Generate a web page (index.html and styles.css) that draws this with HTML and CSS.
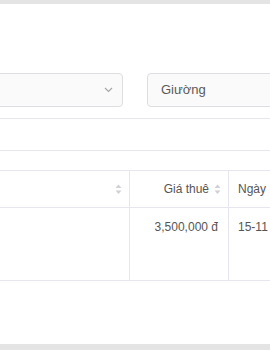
FILE: index.html
```html
<!DOCTYPE html>
<html>
<head>
<meta charset="utf-8">
<link rel="stylesheet" href="styles.css">
</head>
<body>
<div class="panel">
  <div class="filters">
    <div class="select">
      <svg class="chev" width="9" height="6" viewBox="0 0 9 6"><polyline points="1,1 4.5,4.5 8,1" fill="none" stroke="#a6a6a6" stroke-width="1.2"/></svg>
    </div>
    <div class="input">Giường</div>
  </div>
  <div class="bar"></div>
  <div class="table">
    <div class="row head">
      <div class="cell c1"><svg class="sort" width="7" height="11" viewBox="0 0 7 11"><polygon points="3.5,0.5 6.5,4 0.5,4" fill="#d0d0d5"/><polygon points="0.5,6.5 6.5,6.5 3.5,10" fill="#d0d0d5"/></svg></div>
      <div class="cell c2"><span>Giá thuê</span><svg class="sort" width="7" height="11" viewBox="0 0 7 11"><polygon points="3.5,0.5 6.5,4 0.5,4" fill="#d0d0d5"/><polygon points="0.5,6.5 6.5,6.5 3.5,10" fill="#d0d0d5"/></svg></div>
      <div class="cell c3">Ngày</div>
    </div>
    <div class="row body">
      <div class="cell c1"></div>
      <div class="cell c2">3,500,000 đ</div>
      <div class="cell c3">15-11</div>
    </div>
  </div>
</div>
</body>
</html>
```

FILE: styles.css
```css
html, body {
  margin: 0;
  padding: 0;
}
body {
  background: #e4e4e4;
  overflow: hidden;
  width: 270px;
  height: 350px;
  font-family: "Liberation Sans", Arial, sans-serif;
  color: #555;
}
.panel {
  margin-top: 4px;
  height: 340px;
  background: #fff;
  overflow: hidden;
}
.filters {
  display: flex;
  padding-top: 69px;
  white-space: nowrap;
}
.select {
  flex: none;
  box-sizing: border-box;
  margin-left: -60px;
  width: 183px;
  height: 34px;
  border: 1px solid #dedee2;
  border-radius: 4px;
  background: #fafafa;
  display: flex;
  align-items: center;
  justify-content: flex-end;
  padding-right: 9px;
}
.input {
  flex: none;
  box-sizing: border-box;
  margin-left: 24px;
  width: 200px;
  height: 34px;
  border: 1px solid #dedee2;
  border-radius: 4px;
  background: #fafafa;
  font-size: 13px;
  line-height: 32px;
  padding-left: 13px;
  color: #595959;
}
.bar {
  margin-top: 11px;
  height: 31px;
  border-top: 1px solid #e7e6ee;
  border-bottom: 1px solid #e7e6ee;
}
.table {
  margin-top: 19px;
  margin-left: -100px;
  width: 480px;
  border-top: 1px solid #e7e6ee;
  font-size: 12px;
}
.row {
  display: grid;
  grid-template-columns: 230px 99px 1fr;
  border-bottom: 1px solid #e7e6ee;
}
.row.head {
  height: 36px;
}
.row.body {
  height: 72px;
}
.cell {
  box-sizing: border-box;
  border-right: 1px solid #e7e6ee;
  white-space: nowrap;
  overflow: hidden;
}
.cell.c3 {
  border-right: none;
  padding-left: 9px;
}
.head .cell {
  display: flex;
  align-items: center;
  justify-content: flex-end;
  gap: 5px;
  padding-right: 7px;
}
.head .cell.c3 {
  justify-content: flex-start;
}
.body .cell {
  padding-top: 12px;
  line-height: 14px;
}
.body .cell.c2 {
  text-align: right;
  padding-right: 10px;
}
.sort {
  display: block;
}
```
